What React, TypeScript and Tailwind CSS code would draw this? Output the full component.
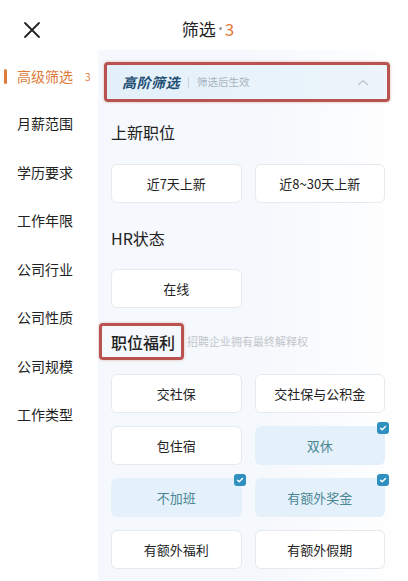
import React from 'react';

const CATEGORIES = ['月薪范围', '学历要求', '工作年限', '公司行业', '公司性质', '公司规模', '工作类型'];

const BENEFITS = [
  { text: '交社保', selected: false },
  { text: '交社保与公积金', selected: false },
  { text: '包住宿', selected: false },
  { text: '双休', selected: true },
  { text: '不加班', selected: true },
  { text: '有额外奖金', selected: true },
  { text: '有额外福利', selected: false },
  { text: '有额外假期', selected: false },
];

const CheckBadge: React.FC = () => (
  <span className="absolute -top-[4px] -right-[4px] flex h-[12px] w-[12px] items-center justify-center rounded-[3px] bg-[#2f8fbf]">
    <svg width="8" height="8" viewBox="0 0 8 8" fill="none">
      <path d="M1.5 4.2 3.2 5.8 6.5 2.4" stroke="#fff" strokeWidth="1.4" strokeLinecap="round" strokeLinejoin="round" />
    </svg>
  </span>
);

const Option: React.FC<{ text: string; selected?: boolean }> = ({ text, selected }) => (
  <div
    className={
      selected
        ? 'relative flex h-[39px] items-center justify-center rounded-[6px] bg-[#e4f1fb] text-[13px] text-[#4a8693]'
        : 'relative flex h-[39px] items-center justify-center rounded-[6px] border border-[#e6e9ee] bg-white text-[13px] text-[#222]'
    }
  >
    {text}
    {selected && <CheckBadge />}
  </div>
);

export default function App() {
  return (
    <div
      className="flex h-[581px] w-[408px] flex-col overflow-hidden bg-white"
      style={{ fontFamily: '"Noto Sans CJK SC", "Noto Sans", sans-serif' }}
    >
      <header className="relative flex h-[50px] shrink-0 items-center justify-center">
        <svg className="absolute left-[23px] top-[21px]" width="18" height="18" viewBox="0 0 18 18">
          <path d="M2 2 16 16M16 2 2 16" stroke="#222" strokeWidth="1.8" strokeLinecap="round" />
        </svg>
        <h1 className="flex items-center pl-[8px] pt-[7px] text-[17px] text-[#222]">
          筛选
          <span className="mx-[3px] h-[3px] w-[3px] rounded-full bg-[#999]" />
          <span className="text-[#e07a3a]">3</span>
        </h1>
      </header>

      <div className="flex flex-1">
        <nav className="w-[98px] shrink-0 bg-white">
          <div className="relative mt-[16px] flex h-[20px] items-center pl-[17px]">
            <span className="absolute left-[4px] top-[3px] h-[15px] w-[3px] rounded-full bg-[#e07a3a]" />
            <span className="text-[14px] text-[#e07a3a]">高级筛选</span>
            <span className="ml-[12px] text-[10px] text-[#e07a3a]">3</span>
          </div>
          <ul className="mt-[27px] flex flex-col gap-[28.5px] pl-[17px]">
            {CATEGORIES.map((c) => (
              <li key={c} className="h-[20px] text-[14px] leading-[20px] text-[#222]">
                {c}
              </li>
            ))}
          </ul>
        </nav>

        <main className="flex-1 bg-gradient-to-r from-[#f5f8fc] via-[#f5f8fc] to-white pl-[6px] pr-[18px] pt-[12px]">
          <div className="flex h-[40px] items-center rounded-[4px] border-[3px] border-[#b9534f] bg-gradient-to-r from-[#e3f0fa] to-[#edf5fb] pl-[15px] pr-[18px] shadow-[0_0_3px_rgba(185,83,79,0.4)]">
            <span className="text-[14px] font-bold italic tracking-[0.5px] text-[#1f4f75]">高阶筛选</span>
            <span className="mx-[8px] h-[11px] w-px bg-[#c9d3dc]" />
            <span className="text-[10.5px] text-[#a9b3bd]">筛选后生效</span>
            <svg className="ml-auto" width="12" height="7" viewBox="0 0 12 7">
              <path d="M1 6 6 1.5 11 6" stroke="#bcc4cc" strokeWidth="1.2" fill="none" />
            </svg>
          </div>

          <div className="pl-[7px] pr-[5px]">
            <h2 className="mt-[18px] h-[24px] text-[16px] leading-[24px] text-[#222]">上新职位</h2>
            <div className="mt-[20px] grid grid-cols-2 gap-x-[13px]">
              <Option text="近7天上新" />
              <Option text="近8~30天上新" />
            </div>

            <h2 className="mt-[23px] h-[24px] text-[16px] leading-[24px] text-[#222]">HR状态</h2>
            <div className="mt-[19px] grid grid-cols-2 gap-x-[13px]">
              <Option text="在线" />
            </div>

            <div className="mt-[15px] flex items-center">
              <h2 className="-ml-[12px] flex h-[37px] items-center rounded-[4px] border-[3px] border-[#b9534f] pl-[9px] pr-[6px] text-[16px] font-medium text-[#222] shadow-[0_0_3px_rgba(185,83,79,0.4)]">
                职位福利
              </h2>
              <span className="ml-[3px] text-[11px] text-[#c2c6cc]">招聘企业拥有最终解释权</span>
            </div>
            <div className="mt-[14px] grid grid-cols-2 gap-x-[13px] gap-y-[13px]">
              {BENEFITS.map(({ text, selected }) => (
                <Option key={text} text={text} selected={selected} />
              ))}
            </div>
          </div>
        </main>
      </div>
    </div>
  );
}
